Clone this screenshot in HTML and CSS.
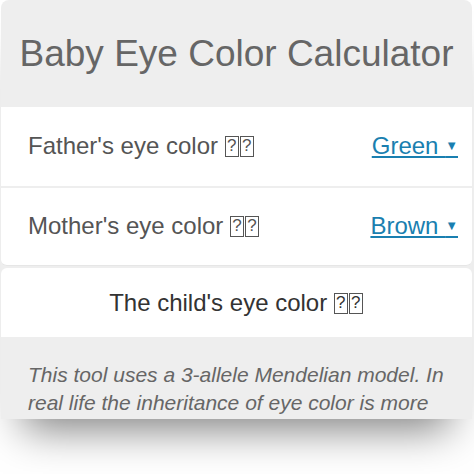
FILE: index.html
```html
<!DOCTYPE html>
<html lang="en">
  <head>
    <meta charset="UTF-8" />
    <meta name="viewport" content="width=device-width, initial-scale=1.0" />
    <title>Baby Eye Color Calculator</title>
    <link rel="stylesheet" href="styles.css">
  </head>
  <body>
    <div class="card">
      <div class="header">
        <h1>Baby Eye Color Calculator</h1>
      </div>
      <div class="group">
        <div class="row">
          <span class="label">Father's eye color <span class="tofu">?</span><span class="tofu">?</span></span>
          <a class="select" href="#">Green <span class="arrow">&#9660;</span></a>
        </div>
        <div class="row">
          <span class="label">Mother's eye color <span class="tofu">?</span><span class="tofu">?</span></span>
          <a class="select" href="#">Brown <span class="arrow">&#9660;</span></a>
        </div>
      </div>
      <div class="result">
        <span>The child's eye color <span class="tofu">?</span><span class="tofu">?</span></span>
      </div>
      <div class="footer">
        <p>This tool uses a 3-allele Mendelian model. In real life the inheritance of eye color is more</p>
      </div>
    </div>
  </body>
</html>
```

FILE: styles.css
```css
html {
  background-color: white;
}
body {
  margin: 0;
  min-height: 474px;
  font-family: "Liberation Sans", Arial, sans-serif;
}
.card {
  position: relative;
  margin: 0 2px 0 1px;
  background-color: #eeeeee;
  border-radius: 8px 8px 0 0;
  box-shadow: 0 32px 40px -22px rgba(0, 0, 0, 0.5);
}
.header {
  height: 107px;
  display: flex;
  align-items: center;
  justify-content: center;
}
h1 {
  margin: 0;
  font-size: 37px;
  font-weight: normal;
  color: #666666;
}
.group {
  background-color: white;
  border-radius: 0 0 6px 6px;
  border-bottom: 1px solid #e6e6e6;
}
.row {
  height: 78px;
  display: flex;
  align-items: center;
  justify-content: space-between;
  padding: 0 14px 1px 27px;
}
.row + .row {
  border-top: 2px solid #eeeeee;
  height: 76px;
}
.label {
  font-size: 24px;
  color: #555555;
}
.select {
  font-size: 24px;
  color: #1a7fb0;
  text-decoration: underline;
}
.arrow {
  font-size: 13px;
  vertical-align: 4px;
}
.tofu {
  display: inline-block;
  box-sizing: border-box;
  width: 14px;
  height: 21px;
  border: 1.5px solid #555555;
  font-size: 17px;
  line-height: 18px;
  text-align: center;
  vertical-align: 3px;
  margin-right: 1px;
}
.result {
  margin-top: 2px;
  height: 69px;
  display: flex;
  align-items: center;
  justify-content: center;
  background-color: white;
  border-radius: 6px 6px 0 0;
  font-size: 24px;
  color: #333333;
}
.footer {
  height: 82px;
  padding: 0 14px 0 27px;
}
.footer p {
  margin: 0;
  padding-top: 24px;
  font-size: 21px;
  line-height: 28px;
  font-style: italic;
  color: #666666;
}
```
